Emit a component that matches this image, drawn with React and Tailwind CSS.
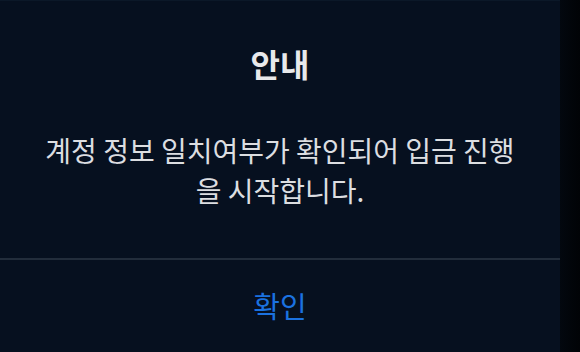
export default function App() {
  return (
    <div
      className="flex h-[352px] w-[580px] bg-[#01050b]"
      style={{ fontFamily: '"Noto Sans CJK KR", "Noto Sans", sans-serif' }}
    >
      <div className="flex w-[560px] flex-col border-t border-[#0b1828] bg-[#06101f]">
        <div className="flex flex-col items-center pt-[42px] pb-[48px]">
          <h2 className="h-[40px] text-[32px] leading-[40px] font-bold text-[#e8e9eb]">안내</h2>
          <p className="mt-[47px] text-center text-[28px] leading-[40px] text-[#dcdee1]">
            계정 정보 일치여부가 확인되어 입금 진행
            <br />을 시작합니다.
          </p>
        </div>
        <div className="h-[2px] bg-[#222d3b]" />
        <button className="flex flex-1 items-center justify-center text-[29px] text-[#1b72e0]">
          확인
        </button>
      </div>
      <div className="w-[20px] bg-gradient-to-r from-[#03080f] to-[#010306]" />
    </div>
  );
}
